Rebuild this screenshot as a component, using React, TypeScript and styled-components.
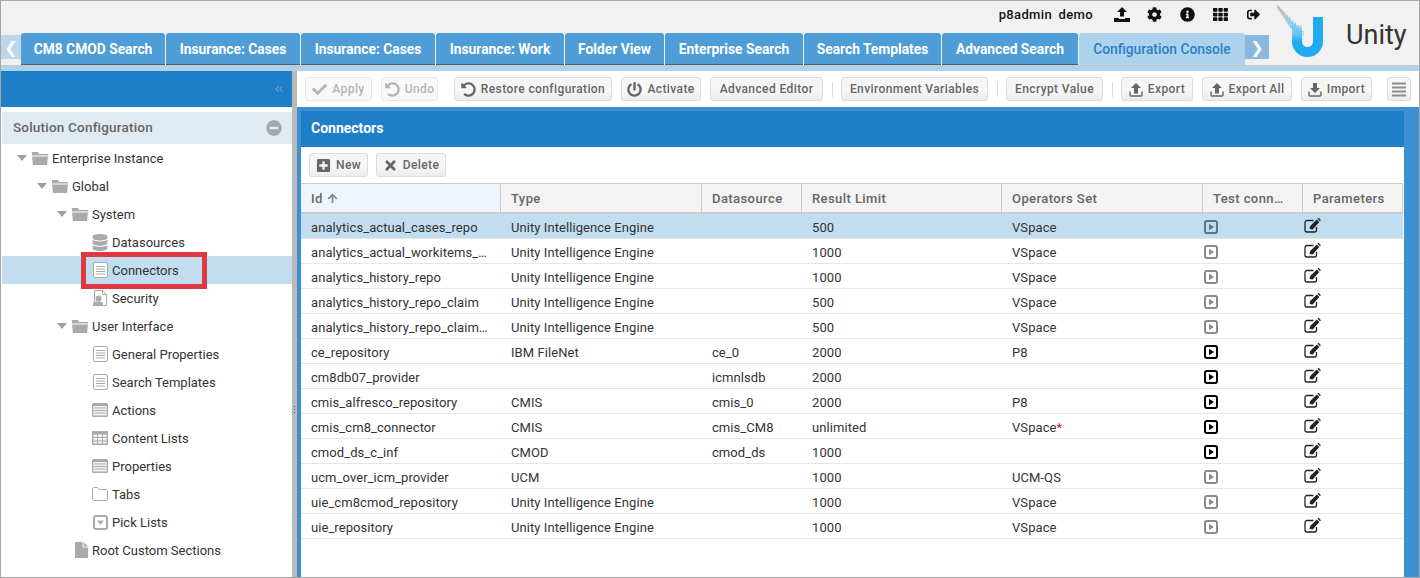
import React from "react";
import styled, { createGlobalStyle } from "styled-components";
import {
  FaCheck, FaUndoAlt, FaPowerOff, FaTimes, FaPlusSquare, FaCog, FaInfoCircle, FaTh,
  FaSignOutAlt, FaDatabase, FaArrowUp, FaMinusCircle, FaAngleDoubleLeft,
} from "react-icons/fa";

const Global = createGlobalStyle`
  * { box-sizing: border-box; }
  html, body { margin: 0; padding: 0; background: #fff; }
  body { font-family: Roboto, "Liberation Sans", Arial, sans-serif; font-size: 13px; color: #333; }
`;

const Page = styled.div`
  width: 1420px; height: 578px; border: 1px solid #a6a6a6; display: flex; flex-direction: column; overflow: hidden; background: #fff;
`;
const Header = styled.header`
  height: 65px; background: #f1f1f1; display: flex; flex: none; border-bottom: 1px solid #c8c8c8;
`;
const HeaderMain = styled.div`
  width: 1269px; display: flex; flex-direction: column;
`;
const UserBar = styled.div`
  height: 33px; display: flex; align-items: center; justify-content: flex-end; padding: 0 0 7px 0; color: #111;
`;
const UserName = styled.span`
  font-size: 13px; font-weight: 500; letter-spacing: .35px; word-spacing: 3px; margin-right: 12px;
`;
const HeadIcon = styled.span`
  width: 33px; display: flex; justify-content: center; align-items: center; font-size: 15px; color: #111;
`;
const TabStrip = styled.nav`
  height: 31px; display: flex; align-items: flex-end;
`;
const Arrow = styled.button<{ $side: "l" | "r" }>`
  width: ${p => (p.$side === "l" ? 20 : 24)}px; height: 24px; margin-bottom: 6px; border: 0; padding: 0; color: #fff;
  font: 700 16px "DejaVu Sans", sans-serif;
  display: flex; align-items: center; justify-content: center;
  background: ${p => (p.$side === "l" ? "#bdd6ea" : "#8ab8dc")};
`;
const Tab = styled.div<{ $w: number; $active?: boolean }>`
  width: ${p => p.$w}px; height: 32px; margin-right: ${p => (p.$active ? 0 : 1)}px; display: flex; align-items: center; justify-content: center;
  font-size: 13.8px; font-weight: ${p => (p.$active ? 500 : 700)}; border-radius: 3px 3px 0 0;
  color: ${p => (p.$active ? "#2a80c8" : "#fff")};
  background: ${p => (p.$active ? "#aed2ec" : "#4f9dd7")};
  border-bottom: ${p => (p.$active ? "0" : "1px solid #44607a")};
`;
const LogoBox = styled.div`
  flex: 1; display: flex; align-items: center; padding: 0 0 6px 4px;
`;
const UnityText = styled.span`
  font-size: 27px; color: #333; margin-left: 20px; margin-top: 9px; font-family: Roboto, sans-serif; font-weight: 400;
`;
const BlueStrip = styled.div`
  height: 5px; background: #aed2ec; flex: none;
`;
const Main = styled.div`
  flex: 1; display: flex; min-height: 0;
`;
const Side = styled.aside`
  width: 291px; flex: none; display: flex; flex-direction: column;
`;
const SideTop = styled.div`
  height: 36px; background: #1f7ec8; display: flex; align-items: center; justify-content: flex-end; padding-right: 8px; color: #5a9ad0; font-size: 10px;
`;
const SectionHead = styled.div`
  height: 32px; margin: 5px 0 0 1px; background: #e0eaf3; display: flex; align-items: center; justify-content: space-between;
  padding: 0 10px 2px 11px; font-size: 13.5px; color: #666; font-weight: 500; letter-spacing: .2px;
`;
const MinusIcon = styled.span`
  color: #a5a7a9; font-size: 16px; display: flex; margin-top: 2px;
`;
const Tree = styled.div`
  display: flex; flex-direction: column;
`;
const TreeRow = styled.div<{ $indent: number; $selected?: boolean }>`
  height: 28px; display: flex; align-items: center; padding-left: ${p => p.$indent}px; position: relative; font-size: 13px; color: #333; margin-left: 1px;
  background: ${p => (p.$selected ? "#c2ddf0" : "transparent")};
`;
const Caret = styled.span`
  width: 0; height: 0; border-left: 5px solid transparent; border-right: 5px solid transparent; border-top: 6px solid #a0a0a0; margin-right: 5px;
`;
const TreeIcon = styled.span`
  width: 16px; height: 16px; margin-right: 4px; display: flex; align-items: center; justify-content: center; color: #aaa; flex: none; font-size: 16px;
`;
const Highlight = styled.div`
  position: absolute; left: 79px; top: -4px; width: 126px; height: 37px; border: 5px solid #de3a44; pointer-events: none;
`;
const Splitter = styled.div`
  width: 5px; flex: none; background: #b9b9b9; display: flex; justify-content: center;
`;
const GripDots = styled.div`
  width: 1px; height: 8px; margin-top: 335px; background: repeating-linear-gradient(#555 0 1px, transparent 1px 3px);
`;
const Content = styled.main`
  flex: 1; min-width: 0; display: flex; flex-direction: column;
`;
const Toolbar = styled.div`
  height: 36px; flex: none; display: flex; align-items: center; padding-left: 8px; gap: 9px;
`;
const Btn = styled.button<{ $w: number; $off?: boolean; $ml?: number }>`
  width: ${p => p.$w}px; height: 24px; flex: none; display: flex; align-items: center; justify-content: center; gap: 5px; padding: 0;
  margin-left: ${p => p.$ml ?? 0}px;
  font: 500 12px Roboto, "Liberation Sans", sans-serif; letter-spacing: .4px;
  color: ${p => (p.$off ? "#b4b4b4" : "#666")};
  border: 1px solid ${p => (p.$off ? "#e8e8e8" : "#dcdcdc")}; border-radius: 3px;
  background: ${p => (p.$off ? "#f9f9f9" : "linear-gradient(#f6f6f6 0 55%, #ececec 100%)")};
  svg { font-size: 15px; color: ${p => (p.$off ? "#b4b4b4" : "#666")}; flex: none; }
`;
const Sep = styled.span`
  width: 1px; height: 15px; background: #dcdcdc; flex: none; margin-right: -1px;
`;
const Panel = styled.section`
  flex: 1; min-height: 0; background: #3d90d3; padding: 4px 15px 0 4px; display: flex; flex-direction: column;
`;
const PanelTitle = styled.div`
  height: 36px; flex: none; background: #1f7ec8; color: #fff; font-weight: 700; font-size: 14px; display: flex; align-items: center; padding: 0 0 2px 10px;
`;
const PanelBody = styled.div`
  flex: 1; background: #fff; display: flex; flex-direction: column;
`;
const SubBar = styled.div`
  height: 36px; flex: none; display: flex; align-items: center; gap: 8px; padding-left: 8px;
`;
const Table = styled.div`
  display: grid; grid-template-columns: 200px 201px 100px 200px 201px 100px 100px;
`;
const Th = styled.div<{ $sorted?: boolean }>`
  height: 31px; display: flex; align-items: center; gap: 4px; padding-left: 10px; font-weight: 500; font-size: 13px; color: #666; letter-spacing: .42px;
  background: ${p => (p.$sorted ? "#edf4fb" : "#f3f3f3")};
  border-top: 1px solid #ccc; border-bottom: 2px solid #ccc; border-right: 1px solid #ccc;
`;
const Td = styled.div<{ $selected?: boolean }>`
  height: 25px; display: flex; align-items: center; padding: 2px 0 0 10px; font-size: 13px; letter-spacing: .07px; color: #333; white-space: nowrap; overflow: hidden;
  border-bottom: 1px solid #e6e6e6;
  background: ${p => (p.$selected ? "#c2ddf0" : "#fff")};
`;
const Star = styled.span`
  color: #d11;
`;
const IconCell = styled(Td)`
  padding-left: 1px;
`;
const EditCell = styled(Td)`
  padding: 0 0 1px 1px;
`;

const PlayBox: React.FC<{ active?: boolean; selected?: boolean }> = ({ active, selected }) => {
  const c = active ? "#000" : selected ? "#5d7486" : "#8a8a8a";
  return (
    <svg width="14" height="14" viewBox="0 0 14 14">
      <rect x="1" y="1" width="12" height="12" rx="2" fill="none" stroke={c} strokeWidth="2" />
      <path d="M5 3.800 10 7 5 10.200Z" fill={c} />
    </svg>
  );
};
const EditIcon = () => (
  <svg width="17" height="15" viewBox="0 0 17 15">
    <path d="M9.500 2.500H3A2 2 0 0 0 1 4.500V12a2 2 0 0 0 2 2h7.500a2 2 0 0 0 2-2V9" fill="none" stroke="#222" strokeWidth="1.300" />
    <path d="M5.500 11l.7-3 6.600-6.600 2.500 2.500L8.700 11.500Z" fill="#222" />
    <path d="M13.500.7l.7-.7h.6l1.900 1.900v.6l-.7.7Z" fill="#222" />
  </svg>
);
const MenuLines = () => (
  <svg width="14" height="15" viewBox="0 0 14 15">
    <path d="M0 1.500h14M0 5.500h14M0 9.500h14M0 13.500h14" stroke="#8c8c8c" strokeWidth="2" />
  </svg>
);
const FolderIcon = () => (
  <svg width="16" height="14" viewBox="0 0 16 14">
    <path d="M0 1h6l1 2h9v1.500H0Z" fill="#aaa" />
    <path d="M0 5.500h16L15 14H1Z" fill="#aaa" />
  </svg>
);
const RootFileIcon = () => (
  <svg width="16" height="16" viewBox="0 0 16 16">
    <path d="M3 0h7.500v5.500H16V16H3Z" fill="#aaa" />
    <path d="M11.500 0 16 4.500h-4.500Z" fill="#aaa" />
  </svg>
);
const DocIcon = () => (
  <svg width="15" height="16" viewBox="0 0 15 16">
    <rect x=".5" y=".5" width="14" height="15" rx="1.500" fill="#fff" stroke="#aaa" />
    <path d="M3 4.500h9M3 7h9M3 9.500h9M3 12h9" stroke="#aaa" />
  </svg>
);
const SecurityIcon = () => (
  <svg width="15" height="16" viewBox="0 0 15 16">
    <path d="M1.500.5h8l4 4v11h-12Z" fill="#fff" stroke="#aaa" />
    <path d="M9.500.5v4h4" fill="none" stroke="#aaa" />
    <circle cx="5.500" cy="8.500" r="3" fill="#aaa" />
    <path d="M0 16v-2.500C0 12 2.500 11.500 5.500 11.500s4.500.5 4.500 2V16Z" fill="#aaa" />
  </svg>
);
const FormIcon = () => (
  <svg width="16" height="14" viewBox="0 0 16 14">
    <rect width="16" height="14" rx="1.500" fill="#aaa" />
    <rect x="1.500" y="3" width="13" height="9.500" fill="#f2f2f2" />
    <path d="M2.500 5h11M2.500 7.500h11M2.500 10h11" stroke="#aaa" />
  </svg>
);
const GridIcon = () => (
  <svg width="16" height="14" viewBox="0 0 16 14">
    <rect width="16" height="14" rx="1" fill="#aaa" />
    <path d="M1.500 3.500h3.500v2.500h-3.500ZM6 3.500h4v2.500h-4ZM11 3.500h3.500v2.500h-3.500ZM1.500 7h3.500v2.500h-3.500ZM6 7h4v2.500h-4ZM11 7h3.500v2.500h-3.500ZM1.500 10.500h3.500v2h-3.500ZM6 10.500h4v2h-4ZM11 10.500h3.500v2h-3.500Z" fill="#f5f5f5" />
  </svg>
);
const TabFolder = () => (
  <svg width="16" height="14" viewBox="0 0 16 14">
    <path d="M.5 12V2C.5 1.200 1 .5 2 .5h3.500L7 2.500h7c1 0 1.500.5 1.500 1.500v8c0 1-.5 1.500-1.500 1.500H2C1 13.500.5 13 .5 12Z" fill="#fff" stroke="#aaa" />
  </svg>
);
const PickIcon = () => (
  <svg width="15" height="15" viewBox="0 0 15 15">
    <rect x="1" y="1" width="13" height="13" rx="2" fill="#fff" stroke="#aaa" strokeWidth="2" />
    <path d="M4 5.500h7L7.500 10Z" fill="#aaa" />
  </svg>
);
const ExportIcon = ({ down }: { down?: boolean }) => (
  <svg width="14" height="15" viewBox="0 0 14 15">
    <path d="M1 9.500V13a1 1 0 0 0 1 1h10a1 1 0 0 0 1-1V9.500" fill="none" stroke="#666" strokeWidth="1.400" />
    {down ? <path d="M5 1h4v5h3L7 11 2 6h3Z" fill="#666" /> : <path d="M7 1l5 5H9v5.500H5V6H2Z" fill="#666" />}
  </svg>
);
const UploadTray = () => (
  <svg width="16" height="15" viewBox="0 0 16 15">
    <path d="M8 0l5 5h-3v4.500H6V5H3Z" fill="#111" />
    <path d="M0 11h5v1h6v-1h5v4H0Z" fill="#111" />
  </svg>
);

const dots: { x: number; y: number; c: string; o: number }[] = [];
const dotColours = ["#e9a0a0", "#8fc0e4", "#a9b6c2", "#6cc3f2", "#dba0a0", "#8fd6d6"];
for (let i = 0; i < 170; i++) {
  const t = i / 170;
  const spreadX = ((i * 61) % 17) / 16 - 0.5;
  const spreadY = ((i * 29) % 13) / 12 - 0.5;
  dots.push({
    x: 3 + t * 22 + spreadX * (1 + t * 9),
    y: 5 + t * 27 + spreadY * (1 + t * 4),
    c: t > 0.5 ? "#6cc3f2" : dotColours[i % 6],
    o: 0.5 + t * 0.45,
  });
}
const Logo = () => (
  <svg width="52" height="58" viewBox="0 0 52 58" style={{ flex: "none" }}>
    <defs>
      <linearGradient id="ug" x1="0" y1="0" x2="0" y2="1">
        <stop offset="0" stopColor="#bfe3f6" />
        <stop offset="1" stopColor="#1fabf0" />
      </linearGradient>
    </defs>
    <path d="M23 40.500a10.500 10.500 0 0 0 21 0V16" fill="none" stroke="#1fabf0" strokeWidth="10" />
    <rect x="18" y="24" width="10" height="17" fill="url(#ug)" />
    {dots.map((d, i) => (
      <rect key={i} x={d.x} y={d.y} width="1.200" height="1.200" fill={d.c} opacity={d.o} />
    ))}
  </svg>
);

const tabs: [string, number][] = [
  ["CM8 CMOD Search", 144], ["Insurance: Cases", 134], ["Insurance: Cases", 134], ["Insurance: Work", 128],
  ["Folder View", 99], ["Enterprise Search", 138], ["Search Templates", 137], ["Advanced Search", 136],
];

type Node = { label: string; indent: number; icon: React.ReactNode; caret?: boolean; selected?: boolean };
const folder = <FolderIcon />;
const nodes: Node[] = [
  { label: "Enterprise Instance", indent: 15, icon: folder, caret: true },
  { label: "Global", indent: 35, icon: folder, caret: true },
  { label: "System", indent: 55, icon: folder, caret: true },
  { label: "Datasources", indent: 90, icon: <FaDatabase size={17} /> },
  { label: "Connectors", indent: 90, icon: <DocIcon />, selected: true },
  { label: "Security", indent: 90, icon: <SecurityIcon /> },
  { label: "User Interface", indent: 55, icon: folder, caret: true },
  { label: "General Properties", indent: 90, icon: <DocIcon /> },
  { label: "Search Templates", indent: 90, icon: <DocIcon /> },
  { label: "Actions", indent: 90, icon: <FormIcon /> },
  { label: "Content Lists", indent: 90, icon: <GridIcon /> },
  { label: "Properties", indent: 90, icon: <FormIcon /> },
  { label: "Tabs", indent: 90, icon: <TabFolder /> },
  { label: "Pick Lists", indent: 90, icon: <PickIcon /> },
  { label: "Root Custom Sections", indent: 70, icon: <RootFileIcon /> },
];

const rows: [string, string, string, string, React.ReactNode, boolean][] = [
  ["analytics_actual_cases_repo", "Unity Intelligence Engine", "", "500", "VSpace", false],
  ["analytics_actual_workitems_…", "Unity Intelligence Engine", "", "1000", "VSpace", false],
  ["analytics_history_repo", "Unity Intelligence Engine", "", "1000", "VSpace", false],
  ["analytics_history_repo_claim", "Unity Intelligence Engine", "", "500", "VSpace", false],
  ["analytics_history_repo_claim…", "Unity Intelligence Engine", "", "500", "VSpace", false],
  ["ce_repository", "IBM FileNet", "ce_0", "2000", "P8", true],
  ["cm8db07_provider", "", "icmnlsdb", "2000", "", true],
  ["cmis_alfresco_repository", "CMIS", "cmis_0", "2000", "P8", true],
  ["cmis_cm8_connector", "CMIS", "cmis_CM8", "unlimited", <>VSpace<Star>*</Star></>, true],
  ["cmod_ds_c_inf", "CMOD", "cmod_ds", "1000", "", true],
  ["ucm_over_icm_provider", "UCM", "", "1000", "UCM-QS", false],
  ["uie_cm8cmod_repository", "Unity Intelligence Engine", "", "1000", "VSpace", false],
  ["uie_repository", "Unity Intelligence Engine", "", "1000", "VSpace", false],
];

export default function App() {
  return (
    <Page>
      <Global />
      <Header>
        <HeaderMain>
          <UserBar>
            <UserName>p8admin demo</UserName>
            <HeadIcon><UploadTray /></HeadIcon>
            <HeadIcon><FaCog /></HeadIcon>
            <HeadIcon><FaInfoCircle /></HeadIcon>
            <HeadIcon><FaTh /></HeadIcon>
            <HeadIcon><FaSignOutAlt size={13} /></HeadIcon>
          </UserBar>
          <TabStrip>
            <Arrow $side="l">❮</Arrow>
            {tabs.map(([t, w], i) => <Tab key={i} $w={w}>{t}</Tab>)}
            <Tab $w={166} $active>Configuration Console</Tab>
            <Arrow $side="r">❯</Arrow>
          </TabStrip>
        </HeaderMain>
        <LogoBox>
          <Logo />
          <UnityText>Unity</UnityText>
        </LogoBox>
      </Header>
      <BlueStrip />
      <Main>
        <Side>
          <SideTop><FaAngleDoubleLeft /></SideTop>
          <SectionHead>
            Solution Configuration
            <MinusIcon><FaMinusCircle /></MinusIcon>
          </SectionHead>
          <Tree>
            {nodes.map(n => (
              <TreeRow key={n.label} $indent={n.indent} $selected={n.selected}>
                {n.caret && <Caret />}
                <TreeIcon>{n.icon}</TreeIcon>
                {n.label}
                {n.selected && <Highlight />}
              </TreeRow>
            ))}
          </Tree>
        </Side>
        <Splitter><GripDots /></Splitter>
        <Content>
          <Toolbar>
            <Btn $w={67} $off><FaCheck />Apply</Btn>
            <Btn $w={57} $off><FaUndoAlt />Undo</Btn>
            <Btn $w={158} $ml={7}><FaUndoAlt />Restore configuration</Btn>
            <Btn $w={80}><FaPowerOff />Activate</Btn>
            <Btn $w={113}>Advanced Editor</Btn>
            <Sep />
            <Btn $w={147}>Environment Variables</Btn>
            <Sep />
            <Btn $w={97}>Encrypt Value</Btn>
            <Sep />
            <Btn $w={72}><ExportIcon />Export</Btn>
            <Btn $w={90}><ExportIcon />Export All</Btn>
            <Btn $w={71}><ExportIcon down />Import</Btn>
            <Btn $w={24} $ml={6}><MenuLines /></Btn>
          </Toolbar>
          <Panel>
            <PanelTitle>Connectors</PanelTitle>
            <PanelBody>
              <SubBar>
                <Btn $w={59}><FaPlusSquare />New</Btn>
                <Btn $w={70}><FaTimes />Delete</Btn>
              </SubBar>
              <Table>
                <Th $sorted>Id <FaArrowUp size={11} color="#888" /></Th>
                <Th>Type</Th>
                <Th>Datasource</Th>
                <Th>Result Limit</Th>
                <Th>Operators Set</Th>
                <Th>Test conn…</Th>
                <Th>Parameters</Th>
                {rows.map((r, i) => {
                  const sel = i === 0;
                  return (
                    <React.Fragment key={i}>
                      <Td $selected={sel}>{r[0]}</Td>
                      <Td $selected={sel}>{r[1]}</Td>
                      <Td $selected={sel}>{r[2]}</Td>
                      <Td $selected={sel}>{r[3]}</Td>
                      <Td $selected={sel}>{r[4]}</Td>
                      <IconCell $selected={sel}><PlayBox active={r[5]} selected={sel} /></IconCell>
                      <EditCell $selected={sel}><EditIcon /></EditCell>
                    </React.Fragment>
                  );
                })}
              </Table>
            </PanelBody>
          </Panel>
        </Content>
      </Main>
    </Page>
  );
}
